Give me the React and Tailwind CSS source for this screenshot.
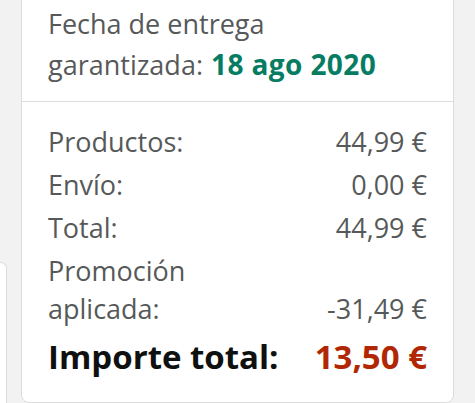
import React from "react";

const rows = [
  { label: "Productos:", value: "44,99 €" },
  { label: "Envío:", value: "0,00 €" },
  { label: "Total:", value: "44,99 €" },
  { label: "Promoción aplicada:", value: "-31,49 €" },
];

const App = () => {
  return (
    <div
      className="w-[475px] h-[403px] overflow-hidden bg-[#f2f2f2] flex items-start"
      style={{ fontFamily: "'Open Sans', 'Noto Sans', sans-serif" }}
    >
      {/* peeking card on the left */}
      <div className="w-[7px] h-[200px] mt-[262px] bg-white border-t border-r border-[#dcdcdc] rounded-tr-[6px] shrink-0" />

      {/* summary card */}
      <div className="ml-[14px] w-[433px] -mt-[10px] bg-white border border-[#dcdcdc] rounded-b-[8px] shrink-0">
        <div className="px-[26px] pt-[13px] pb-[16px] border-b border-[#dcdcdc] text-[27px] leading-[40px] text-[#565959]">
          <div>Fecha de entrega</div>
          <div className="flex items-baseline gap-[8px]">
            <span>garantizada:</span>
            <span className="font-bold text-[28px] tracking-[0.4px] text-[#067d62]">
              18 ago 2020
            </span>
          </div>
        </div>

        <div className="px-[26px] pt-[21px] pb-[21px] flex flex-col gap-[5px]">
          {rows.map((row) => (
            <div
              key={row.label}
              className="flex justify-between items-end text-[27px] leading-[38px] text-[#565959]"
            >
              <span className="max-w-[200px]">{row.label}</span>
              <span>{row.value}</span>
            </div>
          ))}
          <div className="flex justify-between items-center text-[33px] leading-[48px] font-bold">
            <span className="text-[#0f1111]">Importe total:</span>
            <span className="text-[#b12704]">13,50 €</span>
          </div>
        </div>
      </div>
    </div>
  );
};

export default App;
